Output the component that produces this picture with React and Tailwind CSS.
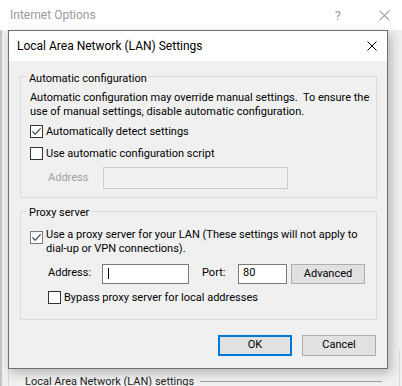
import React from "react";

function Check({ checked, tone = "border-[#333333]" }) {
  return (
    <span className={`w-[13px] h-[13px] shrink-0 border ${tone} bg-white flex items-center justify-center`}>
      {checked && (
        <svg width="11" height="11" viewBox="0 0 11 11">
          <path d="M1.5 5.5 L4.2 8.3 L9.6 2.3" fill="none" stroke="#333" strokeWidth="1.1" />
        </svg>
      )}
    </span>
  );
}

function Cross({ size = 10, color = "#000" }) {
  return (
    <svg width={size} height={size} viewBox="0 0 10 10">
      <path d="M0.5 0.5 L9.5 9.5 M9.5 0.5 L0.5 9.5" stroke={color} strokeWidth="1" />
    </svg>
  );
}

export default function App() {
  return (
    <div className="w-[402px] h-[386px] relative overflow-hidden bg-[#f0f0f0] font-['Roboto',sans-serif] text-[11px] text-black whitespace-nowrap">
      {/* parent window: Internet Options */}
      <div className="h-[30px] bg-white flex items-center pl-[10px] pr-[12px]">
        <span className="text-[12px] text-[#9a9a9a] leading-none">Internet Options</span>
        <span className="ml-auto mr-[38px] text-[13px] text-[#9a9a9a] leading-none">?</span>
        <Cross size={11} color="#9a9a9a" />
      </div>
      <div className="h-[356px] flex flex-col justify-end border-l-2 border-[#c4c4c4]">
        <div className="ml-[6px] mr-[2px] border-l border-r border-[#d9d9d9] h-[40px] flex items-end pl-[16px] pr-[17px] -mb-[4px]">
          <span className="leading-[16px] text-[#1e1e1e]">Local Area Network (LAN) settings</span>
          <span className="flex-1 ml-[6px] mb-[8px] border-t border-[#a0a0a0]" />
        </div>
      </div>

      {/* modal dialog */}
      <div className="absolute left-[8px] top-[30px] w-[380px] h-[339px] border border-[#707070] bg-[#f0f0f0] flex flex-col shadow-[3px_4px_10px_rgba(0,0,0,0.25)]">
        <div className="h-[30px] bg-white flex items-center pl-[8px] pr-[10px] shrink-0">
          <span className="text-[12px] leading-none">Local Area Network (LAN) Settings</span>
          <span className="ml-auto">
            <Cross />
          </span>
        </div>

        <div className="flex flex-col pl-[11px] pr-[10px]">
          <fieldset className="mt-[7px] border border-[#dcdcdc] pl-[9px] pb-[8px]">
            <legend className="-ml-[3px] px-[2px] leading-[16px]">
              <span className="relative top-[3px]">Automatic configuration</span>
            </legend>
            <p className="mt-[6px] leading-[14px] relative top-[1px]">
              Automatic configuration may override manual settings.&nbsp; To ensure the
              <br />
              use of manual settings, disable automatic configuration.
            </p>
            <label className="mt-[7px] flex items-center gap-[3px] h-[13px]">
              <Check checked />
              <span className="relative top-[1px]">Automatically detect settings</span>
            </label>
            <label className="mt-[9px] flex items-center gap-[3px] h-[13px]">
              <Check />
              <span className="relative top-[1px]">Use automatic configuration script</span>
            </label>
            <div className="mt-[7px] flex items-center">
              <span className="ml-[18px] w-[55px] text-[#a0a0a0]">Address</span>
              <div className="w-[185px] h-[22px] border border-[#cccccc] bg-[#f0f0f0]" />
            </div>
          </fieldset>

          <fieldset className="mt-[5px] border border-[#dcdcdc] pl-[9px] pb-[15px]">
            <legend className="-ml-[3px] px-[2px] leading-[16px]">
              <span className="relative top-[2px]">Proxy server</span>
            </legend>
            <label className="mt-[8px] flex items-start gap-[3px]">
              <span className="mt-[4px]">
                <Check checked tone="border-[#7a7a7a]" />
              </span>
              <span className="leading-[14px] relative top-[1px]">
                Use a proxy server for your LAN (These settings will not apply to
                <br />
                dial-up or VPN connections).
              </span>
            </label>
            <div className="mt-[8px] flex items-center">
              <span className="ml-[18px] w-[54px]">Address:</span>
              <div className="w-[87px] h-[20px] border border-[#7a7a7a] bg-white flex items-center pl-[5px]">
                <span className="w-px h-[11px] bg-black" />
              </div>
              <span className="ml-[13px] w-[36px]">Port:</span>
              <div className="w-[49px] h-[20px] border border-[#7a7a7a] bg-white flex items-center pl-[4px]">
                80
              </div>
              <button className="ml-[4px] mt-[1px] w-[74px] h-[20px] border border-[#adadad] bg-[#e1e1e1] flex items-center justify-center">
                Advanced
              </button>
            </div>
            <label className="mt-[7px] ml-[18px] flex items-center gap-[3px] h-[13px]">
              <Check />
              <span className="relative top-[1px]">Bypass proxy server for local addresses</span>
            </label>
          </fieldset>

          <div className="mt-[15px] flex justify-end gap-[10px] pr-[1px]">
            <button className="w-[74px] h-[21px] border-2 border-[#0078d7] bg-[#e1e1e1] flex items-center justify-center">
              OK
            </button>
            <button className="w-[74px] h-[21px] border border-[#adadad] bg-[#e1e1e1] flex items-center justify-center">
              Cancel
            </button>
          </div>
        </div>
      </div>
    </div>
  );
}
